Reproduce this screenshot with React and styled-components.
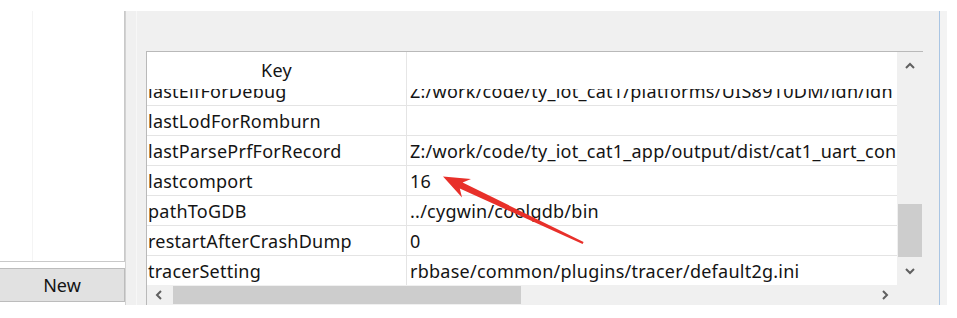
import React from 'react'
import styled, { createGlobalStyle } from 'styled-components'

const rows = [
  { key: 'lastElfForDebug', value: 'Z:/work/code/ty_iot_cat1/platforms/UIS8910DM/ldn/ldn' },
  { key: 'lastLodForRomburn', value: '' },
  { key: 'lastParsePrfForRecord', value: 'Z:/work/code/ty_iot_cat1_app/output/dist/cat1_uart_con' },
  { key: 'lastcomport', value: '16' },
  { key: 'pathToGDB', value: '../cygwin/coolgdb/bin' },
  { key: 'restartAfterCrashDump', value: '0' },
  { key: 'tracerSetting', value: 'rbbase/common/plugins/tracer/default2g.ini' },
]

const marks = [
  { x: 0, y: 20, r: -32 },
  { x: 150, y: 25, r: 28 },
  { x: 560, y: 60, r: 30 },
  { x: 600, y: 225, r: -28 },
  { x: 180, y: 245, r: 30 },
  { x: 420, y: 215, r: -30 },
]

function Chevron({ dir }) {
  const pts = {
    up: '1,7 5,3 9,7',
    down: '1,3 5,7 9,3',
    left: '7,1 3,5 7,9',
    right: '3,1 7,5 3,9',
  }[dir]
  return (
    <svg width="10" height="10" viewBox="0 0 10 10">
      <polyline points={pts} fill="none" stroke="#606060" strokeWidth="2" />
    </svg>
  )
}

function App() {
  return (
    <Page>
      <GlobalStyle />
      <LeftColumn>
        <ListBox />
        <NewButton>New</NewButton>
      </LeftColumn>
      <Panel>
        <Table>
          <Grid>
            <Header>
              <HeadCell>Key</HeadCell>
              <HeadCell />
            </Header>
            <Body>
              <BodyInner>
                {rows.map((r) => (
                  <Row key={r.key}>
                    <KeyCell>{r.key}</KeyCell>
                    <ValueCell>{r.value}</ValueCell>
                  </Row>
                ))}
              </BodyInner>
            </Body>
          </Grid>
          <VScroll>
            <Arrow><Chevron dir="up" /></Arrow>
            <VTrack>
              <VThumb />
            </VTrack>
            <Arrow><Chevron dir="down" /></Arrow>
          </VScroll>
          <HScroll>
            <HArrow><Chevron dir="left" /></HArrow>
            <HTrack>
              <HThumb />
            </HTrack>
            <HArrow><Chevron dir="right" /></HArrow>
          </HScroll>
          <Corner />
        </Table>
      </Panel>
      <EdgeStrip />
      {marks.map((m, i) => (
        <Watermark key={i} style={{ left: m.x, top: m.y, transform: `rotate(${m.r}deg)` }}>
          涂鸦智能-6115
        </Watermark>
      ))}
      <Overlay width="957" height="318" viewBox="0 0 957 318">
        <polygon
          points="443,176.5 471,179 462.6,182.6 583.6,242 582.6,244 459.8,188.6 462,197.5"
          fill="#e8302a"
        />
      </Overlay>
    </Page>
  )
}

export default App

const GlobalStyle = createGlobalStyle`
  html, body {
    margin: 0;
    padding: 0;
    background: #ffffff;
  }
  body {
    font-family: "Noto Sans", "Open Sans", sans-serif;
    color: #141414;
  }
`

const Page = styled.div`
  position: relative;
  width: 957px;
  height: 318px;
  display: flex;
  align-items: flex-start;
  overflow: hidden;
  background: #ffffff;
`

const LeftColumn = styled.div`
  width: 125px;
  padding-top: 11px;
  display: flex;
  flex-direction: column;
  gap: 6px;
`

const ListBox = styled.div`
  height: 251px;
  background: #ffffff;
  border-right: 1px solid #c9c9c9;
  border-bottom: 1px solid #c9c9c9;
  box-sizing: border-box;
  background-image: linear-gradient(#f4f4f4, #f4f4f4);
  background-size: 1px 100%;
  background-position: 32px 0;
  background-repeat: no-repeat;
`

const NewButton = styled.button`
  height: 34px;
  width: 125px;
  margin: 0;
  background: #e1e1e1;
  border: 1px solid #bcbcbc;
  border-left: none;
  font-family: "Noto Sans", "Open Sans", sans-serif;
  font-size: 18px;
  color: #141414;
  padding: 0;
  text-align: center;
`

const Panel = styled.div`
  margin-top: 11px;
  width: 815px;
  height: 294px;
  box-sizing: border-box;
  background: #f0f0f0;
  border-left: 1px solid #d2d2d2;
  border-right: 1px solid #a9c5e3;
  padding: 40px 17px 0 20px;
  background-image: linear-gradient(#f7f7f7, #f7f7f7);
  background-size: 1px 100%;
  background-position: 10px 0;
  background-repeat: no-repeat;
`

const Table = styled.div`
  height: 254px;
  display: grid;
  grid-template-columns: 750px 26px;
  grid-template-rows: 233px 20px;
  border-top: 1px solid #b9b9b9;
  border-left: 1px solid #b9b9b9;
  border-right: 1px solid #b9b9b9;
  box-sizing: border-box;
  width: 777px;
`

const Grid = styled.div`
  background: #ffffff;
  display: flex;
  flex-direction: column;
  overflow: hidden;
  font-size: 18px;
  letter-spacing: 0.25px;
`

const Header = styled.div`
  position: relative;
  z-index: 1;
  display: grid;
  grid-template-columns: 260px 1fr;
  height: 37px;
  background: #ffffff;
  flex-shrink: 0;
`

const HeadCell = styled.div`
  display: flex;
  align-items: center;
  justify-content: center;
  border-right: 1px solid #e6e6e6;
  padding-bottom: 2px;
  &:last-child {
    border-right: none;
  }
`

const Body = styled.div`
  flex: 1;
  overflow: hidden;
`

const BodyInner = styled.div`
  margin-top: -13px;
`

const Row = styled.div`
  display: grid;
  grid-template-columns: 260px 1fr;
  height: 30px;
  box-sizing: border-box;
  border-bottom: 1px solid #e4e4e4;
`

const KeyCell = styled.div`
  border-right: 1px solid #e4e4e4;
  padding-left: 1px;
  display: flex;
  align-items: center;
  white-space: nowrap;
  overflow: hidden;
`

const ValueCell = styled.div`
  padding-left: 3px;
  display: flex;
  align-items: center;
  white-space: nowrap;
  overflow: hidden;
`

const VScroll = styled.div`
  background: #f0f0f0;
  display: flex;
  flex-direction: column;
`

const Arrow = styled.div`
  height: 28px;
  display: flex;
  align-items: center;
  justify-content: center;
`

const VTrack = styled.div`
  flex: 1;
  display: flex;
  flex-direction: column;
  justify-content: flex-end;
`

const VThumb = styled.div`
  height: 53px;
  margin: 0 1px;
  background: #cdcdcd;
`

const HScroll = styled.div`
  background: #f0f0f0;
  display: flex;
  align-items: center;
`

const HArrow = styled.div`
  width: 24px;
  height: 20px;
  display: flex;
  align-items: center;
  justify-content: center;
`

const HTrack = styled.div`
  flex: 1;
  height: 18px;
  display: flex;
  align-items: center;
`

const HThumb = styled.div`
  width: 348px;
  height: 18px;
  margin-left: 2px;
  background: #cdcdcd;
`

const Corner = styled.div`
  background: #f0f0f0;
`

const EdgeStrip = styled.div`
  margin-top: 11px;
  width: 7px;
  height: 294px;
  background: #f3f3f3;
`

const Watermark = styled.div`
  position: absolute;
  font-family: "Noto Sans CJK SC", sans-serif;
  font-size: 30px;
  color: rgba(0, 0, 0, 0.022);
  white-space: nowrap;
  pointer-events: none;
`

const Overlay = styled.svg`
  position: absolute;
  left: 0;
  top: 0;
  pointer-events: none;
`
